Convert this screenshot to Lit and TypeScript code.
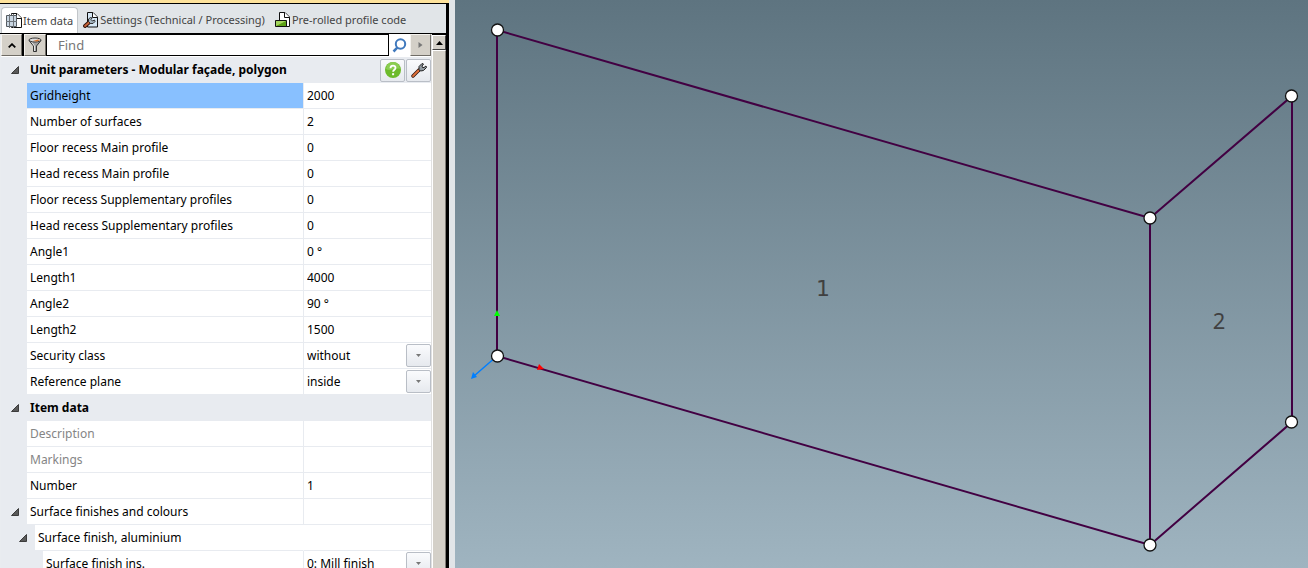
import { LitElement, html, svg, css, nothing } from "lit";
import { customElement, state } from "lit/decorators.js";

type Row = {
  kind: "section" | "group" | "field";
  label: string;
  level?: number;
  value?: string;
  choice?: boolean;
  muted?: boolean;
  selected?: boolean;
  tools?: boolean;
  split?: boolean;
};

const ROWS: Row[] = [
  { kind: "section", label: "Unit parameters - Modular façade, polygon", tools: true },
  { kind: "field", label: "Gridheight", value: "2000", selected: true },
  { kind: "field", label: "Number of surfaces", value: "2" },
  { kind: "field", label: "Floor recess Main profile", value: "0" },
  { kind: "field", label: "Head recess Main profile", value: "0" },
  { kind: "field", label: "Floor recess Supplementary profiles", value: "0" },
  { kind: "field", label: "Head recess Supplementary profiles", value: "0" },
  { kind: "field", label: "Angle1", value: "0 °" },
  { kind: "field", label: "Length1", value: "4000" },
  { kind: "field", label: "Angle2", value: "90 °" },
  { kind: "field", label: "Length2", value: "1500" },
  { kind: "field", label: "Security class", value: "without", choice: true },
  { kind: "field", label: "Reference plane", value: "inside", choice: true },
  { kind: "section", label: "Item data" },
  { kind: "field", label: "Description", value: "", muted: true },
  { kind: "field", label: "Markings", value: "", muted: true },
  { kind: "field", label: "Number", value: "1" },
  { kind: "group", label: "Surface finishes and colours", split: true },
  { kind: "group", label: "Surface finish, aluminium", level: 1 },
  { kind: "field", label: "Surface finish ins.", value: "0: Mill finish", choice: true, level: 2 },
];

const gridIcon = html`<svg width="16" height="16" viewBox="0 0 16 16" aria-hidden="true">
  <path d="M5.500 1.500V.5H11L15.500 5v9.500h-10z" fill="#fff" stroke="#111"/>
  <path d="M10.500.5V5.500h5" fill="#fff" stroke="#111"/>
  <path d="M.5 2.500h10v11H.5z" fill="#c9d6e2" stroke="#555b61"/>
  <path d="M3.500 1v14M7.500 1v14M0 8.500h11" fill="none" stroke="#6d747b"/>
</svg>`;

const settingsIcon = html`<svg width="16" height="16" viewBox="0 0 16 16" aria-hidden="true">
  <path d="M4.500.5H10L14.500 5v10h-10z" fill="#d6e8f6" stroke="#111"/>
  <path d="M9.500.5V5.500h5" fill="#fff" stroke="#111"/>
  <path d="M2 14 6.500 10" stroke="#35150c" stroke-width="3.800" stroke-linecap="round"/>
  <path d="M2 14 6 10.500" stroke="#c9653a" stroke-width="1.800" stroke-linecap="round"/>
  <path d="M5.500 9.500V7l2-1.500L9 6 8 7.500 9.500 9 11.500 8l.5 1.500L10 11.500H7.500z" fill="#a4b4c0" stroke="#222" stroke-width=".9"/>
</svg>`;

const codeIcon = html`<svg width="16" height="16" viewBox="0 0 16 16" aria-hidden="true">
  <path d="M4.500.5H10L14.500 5v9.500h-10z" fill="#fff" stroke="#111"/>
  <path d="M9.500.5V5.500h5" fill="#fff" stroke="#111"/>
  <path d="M.5 8.500h11v6H.5z" fill="#5ba016" stroke="#111"/>
  <path d="M1 9h10L1 14z" fill="#a4d45f"/>
</svg>`;

const funnelIcon = html`<svg width="14" height="16" viewBox="0 0 14 16" aria-hidden="true">
  <path d="M1 3.500 5.500 9v5.500h3V9L13 3.500z" fill="#a3a3a3" stroke="#333"/>
  <path d="M3.500 5 6.500 9v5" fill="none" stroke="#e4e4e4"/>
  <ellipse cx="7" cy="3" rx="6" ry="2" fill="#ddd" stroke="#333"/>
  <path d="M5 4 10 2.500 12 3 9 4.500z" fill="#d9732e"/>
</svg>`;

const searchIcon = html`<svg width="15" height="15" viewBox="0 0 15 15" aria-hidden="true">
  <circle cx="8.500" cy="6" r="4.700" fill="#fff" stroke="#4079bd" stroke-width="2"/>
  <path d="M5.300 9.700 1.500 13.500" stroke="#4079bd" stroke-width="2.500"/>
</svg>`;

const helpIcon = html`<svg width="18" height="18" viewBox="0 0 18 18" aria-hidden="true">
  <circle cx="9" cy="9" r="8" fill="#6dbb2c"/>
  <path d="M2 8a7 7 0 0 1 14 0C12 6 6 11 2 8z" fill="#8bcd52"/>
  <path d="M6.500 7.200C6.500 3.800 11.700 4 11.500 7c0 1.700-2.400 1.800-2.400 3.800" fill="none" stroke="#fff" stroke-width="1.800"/>
  <path d="M8.100 12.200h2v2h-2z" fill="#fff"/>
</svg>`;

const wrenchIcon = html`<svg width="16" height="16" viewBox="0 0 16 16" aria-hidden="true">
  <path d="M2 14 8 8" stroke="#31150d" stroke-width="3.400" stroke-linecap="round"/>
  <path d="M2 14 7.500 8.500" stroke="#e2713a" stroke-width="1.800" stroke-linecap="round"/>
  <path d="M8 7.500V4.500l3-3 1.500.5-1.500 2 .5 1.500H13L15 4l.5 1.500-3 3-3 .5z" fill="#929ba2" stroke="#252525"/>
</svg>`;

@customElement("property-panel")
export class PropertyPanel extends LitElement {
  static styles = css`
    :host {
      display: flex;
      flex-direction: column;
      min-width: 0;
      height: 100%;
      box-sizing: border-box;
      padding-right: 6px;
      background: #e1e5e8;
      font: 12px/16px "Noto Sans", "Open Sans", sans-serif;
      color: #000;
    }
    * { box-sizing: border-box; }
    svg { display: block; flex: none; }
    button, input, select { font: inherit; color: inherit; border-radius: 0; margin: 0; }
    button { padding: 0; display: flex; align-items: center; justify-content: center; }
    .strip { flex: none; height: 3px; background: #fee39c; }
    .frame {
      flex: 1;
      min-height: 0;
      display: flex;
      flex-direction: column;
      border: solid #000;
      border-width: 1px 3px 0 0;
    }
    .tabs { flex: none; display: flex; height: 29px; padding: 3px 0 0 1px; background: #e1e5e8; color: #444; font-size: 11px; }
    .tab { border: 1px solid transparent; background: none; gap: 1px; padding: 0 4px; }
    .tab.active { background: #fff; border-color: #c2c6ca; border-bottom: 0; border-radius: 4px 4px 0 0; }
    .body { flex: 1; min-height: 0; display: flex; border-top: 1px solid #000; }
    .main { flex: 1; min-width: 0; display: flex; flex-direction: column; background: #fff; border-left: 1px solid #e9ecf0; border-right: 1px solid #e1e1e1; }
    .find { flex: none; display: flex; height: 22px; margin-bottom: 1px; background: #000; }
    .tool { flex: none; width: 21px; border: 1px solid; border-color: #f4f2ee #6f6c66 #6f6c66 #f4f2ee; background: #d4d0c8; }
    .tool.wide { width: 22px; margin-left: 2px; }
    .query { flex: 1; min-width: 0; border: 1px solid #000; background: #fff; padding: 0 11px; font-size: 13px; }
    .query::placeholder { color: #777; opacity: 1; }
    .search { width: 21px; border: 0; background: #fff; }
    .rows { flex: 1; min-height: 0; overflow: hidden; }
    .row { display: grid; grid-template-columns: 26px minmax(0, 277px) minmax(80px, 1fr); height: 26px; }
    .row.level1 { grid-template-columns: 34px minmax(0, 269px) minmax(80px, 1fr); }
    .row.level2 { grid-template-columns: 42px minmax(0, 261px) minmax(80px, 1fr); }
    .gutter { display: flex; align-items: center; justify-content: flex-end; padding-right: 8px; background: #e8ebf0; }
    .toggle { border: 0; background: none; }
    .name { display: flex; align-items: center; padding-left: 3px; border: solid #e8ebf0; border-width: 0 1px 1px 0; white-space: nowrap; }
    .value { display: flex; align-items: center; min-width: 0; border-bottom: 1px solid #e8ebf0; }
    .plain .name { border-right-color: transparent; }
    .muted .name { color: #858585; }
    .selected .name { background: #88c0ff; }
    .section { background: #e8ebf0; grid-template-columns: 26px 1fr auto; font-weight: 700; }
    .section .name { border: 0; }
    .actions { display: flex; align-items: center; gap: 1px; }
    .action { width: 25px; height: 23px; border: 1px solid #b9bec6; border-radius: 2px; background: linear-gradient(#fafbfd, #e6e9ee); }
    .edit { width: 100%; height: 100%; border: 0; padding: 0 3px; background: none; outline: none; }
    .pick { position: relative; display: flex; width: 100%; height: 100%; align-items: center; justify-content: flex-end; }
    .choice { position: absolute; inset: 0; width: 100%; appearance: none; border: 0; padding: 0 3px; background: none; outline: none; }
    .drop { display: flex; align-items: center; justify-content: center; width: 25px; height: 23px; border: 1px solid #b9bec6; border-radius: 2px; background: linear-gradient(#fafbfd, #e6e9ee); }
    .scroll { flex: none; display: flex; flex-direction: column; width: 14px; background: #d4d0c8; border-top: 1px solid #000; }
    .up { height: 15px; border: 1px solid; border-color: #fff #404040 #404040 #fff; background: #d4d0c8; }
    .thumb { flex: 1; border: solid; border-width: 1px 1px 0; border-color: #fff #807d77 #fff #fff; }
  `;

  @state() private tab = 0;

  private tabs = [
    { label: "Item data", icon: gridIcon },
    { label: "Settings (Technical / Processing)", icon: settingsIcon },
    { label: "Pre-rolled profile code", icon: codeIcon },
  ];

  private toggle(label: string) {
    return html`<button class="toggle" aria-label="Collapse ${label}">
      <svg width="8" height="8" viewBox="0 0 8 8"><path d="M7.500.5v7H.5z" fill="#595959" stroke="#222" stroke-width=".8"/></svg>
    </button>`;
  }

  private row(r: Row, i: number) {
    const id = `field-${i}`;
    if (r.kind === "section") {
      return html`<div class="row section">
        <div class="gutter">${this.toggle(r.label)}</div>
        <div class="name">${r.label}</div>
        ${r.tools
          ? html`<div class="actions">
              <button class="action" aria-label="Help">${helpIcon}</button>
              <button class="action" aria-label="Options">${wrenchIcon}</button>
            </div>`
          : nothing}
      </div>`;
    }
    const cls = `row level${r.level ?? 0} ${r.muted ? "muted" : ""} ${r.selected ? "selected" : ""}`;
    if (r.kind === "group") {
      return html`<div class="${cls} ${r.split ? "" : "plain"}">
        <div class="gutter">${this.toggle(r.label)}</div>
        <div class="name">${r.label}</div>
        <div class="value"></div>
      </div>`;
    }
    return html`<div class=${cls}>
      <div class="gutter"></div>
      <label class="name" for=${id}>${r.label}</label>
      <div class="value">
        ${r.choice
          ? html`<div class="pick">
              <span class="drop"><svg width="5" height="3" viewBox="0 0 5 3"><path d="M0 0h5L2.500 3z" fill="#777"/></svg></span>
              <select class="choice" id=${id}><option>${r.value}</option></select>
            </div>`
          : html`<input class="edit" id=${id} .value=${r.value ?? ""} ?disabled=${!!r.muted} />`}
      </div>
    </div>`;
  }

  render() {
    return html`
      <div class="strip"></div>
      <div class="frame">
        <div class="tabs" role="tablist">
          ${this.tabs.map(
            (t, i) => html`<button class="tab ${i === this.tab ? "active" : ""}" role="tab"
              aria-selected=${i === this.tab} @click=${() => (this.tab = i)}>${t.icon}<span>${t.label}</span></button>`,
          )}
        </div>
        <div class="body">
          <div class="main">
            <div class="find">
              <button class="tool" aria-label="Collapse all">
                <svg width="8" height="5" viewBox="0 0 8 5"><path d="M.7 4.300 4 1.200l3.300 3.100" fill="none" stroke="#000" stroke-width="1.800"/></svg>
              </button>
              <button class="tool wide" aria-label="Filter">${funnelIcon}</button>
              <input class="query" type="text" placeholder="Find" aria-label="Find" />
              <button class="search" aria-label="Search">${searchIcon}</button>
              <button class="tool" aria-label="Next">
                <svg width="5" height="8" viewBox="0 0 5 8"><path d="M.5 1v6l4-3z" fill="#777"/></svg>
              </button>
            </div>
            <div class="rows">${ROWS.map((r, i) => this.row(r, i))}</div>
          </div>
          <div class="scroll">
            <button class="up" aria-label="Scroll up">
              <svg width="7" height="4" viewBox="0 0 7 4"><path d="M0 4 3.500 0 7 4z" fill="#000"/></svg>
            </button>
            <div class="thumb"></div>
          </div>
        </div>
      </div>
    `;
  }
}

@customElement("facade-view")
export class FacadeView extends LitElement {
  static styles = css`
    :host { display: block; min-width: 0; height: 100%; background: linear-gradient(#5e7480, #9fb4c0); }
    .scene { display: block; width: 100%; height: 100%; }
    .edge { fill: none; stroke: #420042; stroke-width: 2; }
    .node { fill: #fff; stroke: #111; stroke-width: 1.300; }
    .number { font: 22px "Noto Sans", sans-serif; fill: #404040; text-anchor: middle; }
    .number.serifed { font-family: "DejaVu Sans", sans-serif; }
  `;

  private nodes = [[42.5, 30], [695, 218], [836.5, 96], [836.5, 422], [695, 545], [42.5, 356]];

  render() {
    return html`<svg class="scene" viewBox="0 0 853 568" role="img" aria-label="Modular façade">
      <path class="edge" d="M42 30 695 218V545L42 356z"/>
      <path class="edge" d="M695 218 837 96V422L695 545"/>
      <path d="M42 356 19 376" stroke="#007fff" stroke-width="1.500"/>
      <path d="m16 379 2-7 4 5z" fill="#007fff"/>
      <path d="m42 310 3 6h-6z" fill="#0f0"/>
      <path d="m82 370 2-6 5 5z" fill="#f00"/>
      ${this.nodes.map(([x, y]) => svg`<circle class="node" cx=${x} cy=${y} r="6"/>`)}
      <text class="number serifed" x="368" y="296">1</text>
      <text class="number" x="764" y="329">2</text>
    </svg>`;
  }
}

@customElement("app-root")
export class AppRoot extends LitElement {
  static styles = css`
    :host {
      display: grid;
      grid-template: minmax(0, 1fr) / 455px minmax(0, 1fr);
      height: 100vh;
      overflow: hidden;
    }
  `;

  render() {
    return html`<property-panel></property-panel><facade-view></facade-view>`;
  }
}
